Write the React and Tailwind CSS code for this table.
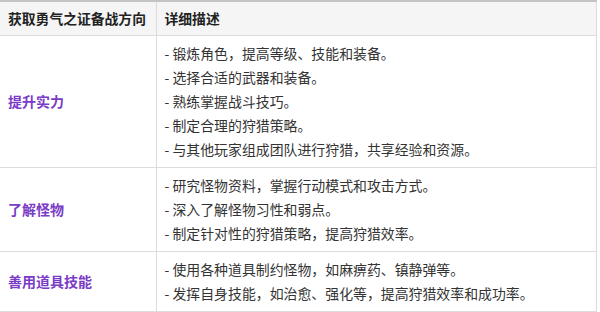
import React from 'react';

const rows = [
  {
    title: '提升实力',
    items: [
      '锻炼角色，提高等级、技能和装备。',
      '选择合适的武器和装备。',
      '熟练掌握战斗技巧。',
      '制定合理的狩猎策略。',
      '与其他玩家组成团队进行狩猎，共享经验和资源。',
    ],
  },
  {
    title: '了解怪物',
    items: [
      '研究怪物资料，掌握行动模式和攻击方式。',
      '深入了解怪物习性和弱点。',
      '制定针对性的狩猎策略，提高狩猎效率。',
    ],
  },
  {
    title: '善用道具技能',
    items: [
      '使用各种道具制约怪物，如麻痹药、镇静弹等。',
      '发挥自身技能，如治愈、强化等，提高狩猎效率和成功率。',
    ],
  },
];

export default function App() {
  return (
    <div
      className="w-[600px] h-[312px] bg-white overflow-hidden"
      style={{ fontFamily: '"Noto Sans CJK SC", "Noto Sans", sans-serif' }}
    >
      <table className="w-[597px] border-collapse border-t-2 border-t-[#c4c4c4] border-r border-r-[#dcdcdc] table-fixed">
        <colgroup>
          <col className="w-[156px]" />
          <col />
        </colgroup>
        <thead>
          <tr className="bg-[#f5f5f5] border-b border-[#dcdcdc]">
            <th className="h-[34px] pl-2 pr-0 text-left text-[13.8px] leading-[20px] font-bold text-[#222] border-r border-[#dcdcdc] whitespace-nowrap">
              获取勇气之证备战方向
            </th>
            <th className="px-2 text-left text-[13.8px] leading-[20px] font-bold text-[#222]">详细描述</th>
          </tr>
        </thead>
        <tbody>
          {rows.map((row) => (
            <tr key={row.title} className="border-b border-[#dcdcdc]">
              <td className="px-2 align-middle text-[14px] font-bold text-[#7a3bc6] border-r border-[#dcdcdc]">
                {row.title}
              </td>
              <td className="px-2 pt-[5px] pb-[6px] text-[13.9px] leading-[24px] text-[#333]">
                {row.items.map((item) => (
                  <div key={item}>- {item}</div>
                ))}
              </td>
            </tr>
          ))}
        </tbody>
      </table>
    </div>
  );
}
